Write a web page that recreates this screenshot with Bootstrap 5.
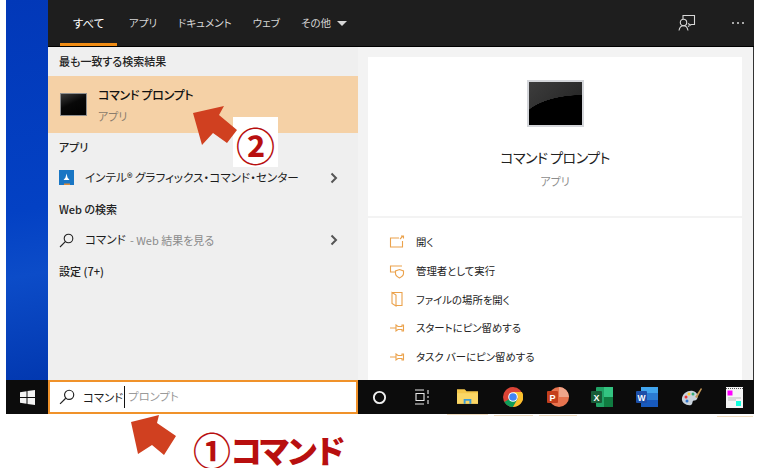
<!DOCTYPE html>
<html lang="ja">
<head>
  <meta charset="UTF-8">
  <meta name="viewport" content="width=device-width, initial-scale=1.0">
  <title>コマンド プロンプト</title>
  <link rel="stylesheet" href="https://cdn.jsdelivr.net/npm/bootstrap@5.3.0/dist/css/bootstrap.min.css">
  <style>
    body {
      margin: 0;
      background: #fff;
      font-family: "Noto Sans CJK JP", "Liberation Sans", sans-serif;
      font-size: 11px;
      font-feature-settings: "palt";
      color: #1c1c1c;
    }
    .shot { position: relative; width: 760px; height: 468px; overflow: hidden; }
    .desktop { width: 748px; height: 414px; margin-left: 6px; }
    .wall { width: 42px; background: linear-gradient(170deg, #0238b8 0%, #0341c4 55%, #0c4cc8 72%, #0238b0 100%); }
    .main { width: 706px; }

    /* top tabs */
    .tabbar { height: 47px; background: #1e1e1e; color: #d6d6d6; border-bottom: 1px solid #000; padding-left: 12px; }
    .tabitem { height: 46px; font-size: 10.5px; line-height: 46px; margin-right: 21px; }
    .tabitem.on { color: #fff; border-bottom: 3px solid #f08c14; width: 57px; text-align: center; margin-right: 12px; font-size: 11.5px; }
    .caret-down { width: 0; height: 0; border-left: 5px solid transparent; border-right: 5px solid transparent; border-top: 5px solid #d6d6d6; margin-left: 6px; margin-top: 1px; }
    .tab-tools { height: 45px; gap: 35px; padding-right: 9px; }

    /* left results */
    .results { width: 310px; height: 333px; background: #efefef; }
    .head-row { font-size: 11px; font-weight: 500; padding-left: 11px; color: #222; }
    .best { height: 57px; background: #f5d1a6; padding-left: 12px; gap: 11px; }
    .cmd-mini { width: 27px; height: 23px; flex: none; background: linear-gradient(155deg, #3a3a3a 0%, #080808 45%, #000 100%); border: 1px solid #8d8d8d; }
    .best-name { font-size: 12px; font-weight: 500; color: #111; line-height: 18px; letter-spacing: -0.3px; }
    .best-sub { font-size: 11px; color: #8a7c6c; line-height: 16px; margin-top: 4px; }
    .res-line { padding: 0 20px 0 11px; font-size: 11.6px; gap: 11px; }
    .grey-note { color: #8b8b8b; font-size: 11px; margin-left: -7px; }

    /* right detail */
    .detail { width: 396px; height: 333px; background: #f3f3f3; padding: 10px 11px 0 10px; border-right: 1px solid #333; }
    .info-box { height: 159px; background: #fff; margin-bottom: 2px; }
    .big-cmd { width: 57px; height: 47px; margin-top: 23px; border: 2px solid #d4d6da; background: radial-gradient(ellipse 62px 30px at 100% 100%, #000 99%, transparent 100%), linear-gradient(135deg, #3d3d3d, #1e1e1e); }
    .big-name { font-size: 14px; color: #222; margin-top: 20px; line-height: 20px; letter-spacing: -0.5px; }
    .big-sub { font-size: 11px; color: #8d8d8d; margin-top: 6px; line-height: 16px; }
    .action-box { height: 162px; background: #fff; padding: 10px 0 0 21px; }
    .action-row { height: 28.6px; gap: 11px; font-size: 10.4px; color: #222; }
    .action-ico { width: 16px; height: 16px; flex: none; }

    /* taskbar */
    .taskbar { height: 34px; background: #0c0c0c; }
    .startbtn { width: 42px; flex: none; }
    .searchbox { width: 310px; height: 34px; flex: none; background: #fff; border: 2px solid #f0922a; padding-left: 9px; font-size: 11.4px; }
    .ghost-text { color: #9a9a9a; }
    .typed { border-right: 1px solid #111; padding-right: 1px; margin-right: 3px; line-height: 22px; }
    .tray-slot { width: 44.6px; flex: none; position: relative; }
    .running::after { content: ""; position: absolute; left: 3px; right: 3px; bottom: -9px; height: 1px; background: #f0dcc0; }

    /* red annotations */
    .note-red { color: #b80f0f; font-weight: 700; font-feature-settings: normal; }
    .note-one { position: absolute; left: 193px; top: 431px; height: 36px; line-height: 36px; white-space: nowrap; }
    .note-one span { display: inline-block; }
    .note-one .circled { font-size: 38px; }
    .note-one .word { font-size: 32px; letter-spacing: -4px; font-weight: 900; margin-left: -1px; vertical-align: 2px; }
    .note-two { position: absolute; left: 233px; top: 117px; width: 45px; height: 50px; background: #fff; font-size: 39px; line-height: 54px; text-align: center; }
    .arrow { position: absolute; }
  </style>
</head>
<body>
  <div class="shot">
    <div class="desktop d-flex flex-column">
      <div class="d-flex flex-grow-1">
        <div class="wall"></div>
        <div class="main d-flex flex-column">
          <div class="tabbar d-flex align-items-start">
            <div class="tabitem on">すべて</div>
            <div class="tabitem">アプリ</div>
            <div class="tabitem">ドキュメント</div>
            <div class="tabitem">ウェブ</div>
            <div class="tabitem d-flex align-items-center">その他<span class="caret-down"></span></div>
            <div class="tab-tools ms-auto d-flex align-items-center">
              <svg width="18" height="18" viewBox="0 0 18 18" fill="none" stroke="#d8d8d8" stroke-width="1.1"><path d="M5 5V1.5h11.5v9H12.5"/><path d="M10 9.5l2.500 1.500-2.500 1.500"/><circle cx="5.500" cy="8.500" r="3.200"/><path d="M1 16.500c.5-3 2.200-4.800 4.500-4.800s4 1.800 4.500 4.800"/></svg>
              <svg width="14" height="4" viewBox="0 0 14 4" fill="#d8d8d8"><circle cx="2" cy="2" r="1"/><circle cx="7" cy="2" r="1"/><circle cx="12" cy="2" r="1"/></svg>
            </div>
          </div>
          <div class="d-flex flex-grow-1">
            <div class="results">
              <div class="head-row d-flex align-items-center" style="height:29px">最も一致する検索結果</div>
              <div class="best d-flex align-items-center">
                <div class="cmd-mini"></div>
                <div>
                  <div class="best-name">コマンド プロンプト</div>
                  <div class="best-sub">アプリ</div>
                </div>
              </div>
              <div class="head-row d-flex align-items-center" style="height:28px">アプリ</div>
              <div class="res-line d-flex align-items-center" style="height:33px">
                <svg width="15" height="15" viewBox="0 0 15 15" class="flex-shrink-0"><rect width="15" height="15" fill="#1976c4"/><rect y="13.500" x="5" width="6" height="1.500" fill="#d98a3a"/><path d="M7.500 3.500l1 4 2 2.500h-6l2-2.500z" fill="#fff"/></svg>
                <span class="text-nowrap">インテル® グラフィックス・コマンド・センター</span>
                <svg class="ms-auto flex-shrink-0" width="8" height="12" viewBox="0 0 8 12" fill="none" stroke="#555" stroke-width="2"><path d="M1.500 1.500L6 6l-4.500 4.500"/></svg>
              </div>
              <div class="head-row d-flex align-items-center" style="height:30px">Web の検索</div>
              <div class="res-line d-flex align-items-center" style="height:32px">
                <svg width="15" height="15" viewBox="0 0 15 15" fill="none" stroke="#222" stroke-width="1.100" class="flex-shrink-0"><circle cx="9.500" cy="5.500" r="4.300"/><path d="M6.300 8.700L1 14"/></svg>
                <span>コマンド</span><span class="grey-note">- Web 結果を見る</span>
                <svg class="ms-auto flex-shrink-0" width="8" height="12" viewBox="0 0 8 12" fill="none" stroke="#555" stroke-width="2"><path d="M1.500 1.500L6 6l-4.500 4.500"/></svg>
              </div>
              <div class="head-row d-flex align-items-center" style="height:31px">設定 (7+)</div>
            </div>
            <div class="detail">
              <div class="info-box d-flex flex-column align-items-center">
                <div class="big-cmd"></div>
                <div class="big-name">コマンド プロンプト</div>
                <div class="big-sub">アプリ</div>
              </div>
              <div class="action-box">
                <div class="action-row d-flex align-items-center">
                  <svg class="action-ico" viewBox="0 0 16 16" fill="none" stroke="#eba24c" stroke-width="1.100"><path d="M10 4H1.500v9h12V7"/><path d="M11 5l3-3M12 2h2.500v2.500"/></svg>
                  <span>開く</span>
                </div>
                <div class="action-row d-flex align-items-center">
                  <svg class="action-ico" viewBox="0 0 16 16" fill="none" stroke="#eba24c" stroke-width="1.100"><path d="M13 3H1.500v6H6"/><path d="M10.500 6.500l4 1.500v2.500c0 2-2 3.500-4 4.500-2-1-4-2.500-4-4.500V8z"/></svg>
                  <span>管理者として実行</span>
                </div>
                <div class="action-row d-flex align-items-center">
                  <svg class="action-ico" viewBox="0 0 16 16" fill="none" stroke="#eba24c" stroke-width="1.100"><path d="M3 1.500h10v13H7"/><path d="M3 1.500l4 2.500v11l-4-2.500z"/></svg>
                  <span>ファイルの場所を開く</span>
                </div>
                <div class="action-row d-flex align-items-center">
                  <svg class="action-ico" viewBox="0 0 16 16" fill="none" stroke="#eba24c" stroke-width="1.100"><path d="M1 8h6M7 5l2 1.500h4V5h1.500v6H13V9.500H9L7 11z"/></svg>
                  <span>スタートにピン留めする</span>
                </div>
                <div class="action-row d-flex align-items-center">
                  <svg class="action-ico" viewBox="0 0 16 16" fill="none" stroke="#eba24c" stroke-width="1.100"><path d="M1 8h6M7 5l2 1.500h4V5h1.500v6H13V9.500H9L7 11z"/></svg>
                  <span>タスク バーにピン留めする</span>
                </div>
              </div>
            </div>
          </div>
        </div>
      </div>
      <div class="taskbar d-flex align-items-center">
        <div class="startbtn d-flex justify-content-center">
          <svg width="15" height="15" viewBox="0 0 15 15" fill="#f2f2f2"><path d="M0 2.200l6.500-1V7H0zM7.500 1l7.500-1v7H7.500zM0 8h6.500v5.800l-6.500-1zM7.500 8H15v7l-7.500-1z"/></svg>
        </div>
        <div class="searchbox d-flex align-items-center">
          <svg width="16" height="16" viewBox="0 0 15 15" fill="none" stroke="#222" stroke-width="1.100"><circle cx="9.500" cy="5.500" r="4.300"/><path d="M6.300 8.700L1 14"/></svg>
          <span class="typed ms-2">コマンド</span><span class="ghost-text">プロンプト</span>
        </div>
        <div class="d-flex flex-shrink-0 align-items-center">
          <div class="tray-slot d-flex justify-content-center" style="width:42px">
            <svg width="15" height="15" viewBox="0 0 16 16" fill="none" stroke="#f0f0f0" stroke-width="2"><circle cx="8" cy="8" r="6"/></svg>
          </div>
          <div class="tray-slot d-flex justify-content-center" style="width:44px">
            <svg width="17" height="16" viewBox="0 0 17 16" fill="none" stroke="#e8e8e8" stroke-width="1.100"><path d="M1 1h9M1 15h9M2 4.500h8v7H2z"/><path d="M14 1v4M14 7v2M14 11v4"/></svg>
          </div>
          <div class="tray-slot running d-flex justify-content-center" style="width:47px">
            <svg width="21" height="18" viewBox="0 0 22 18"><path d="M0 1h8l2 2h12v13H0z" fill="#f5c84b"/><rect y="5" width="22" height="11" fill="#fbd766"/><path d="M7 16v-5h8v5h-2v-3H9v3z" fill="#3a9bd8"/></svg>
          </div>
          <div class="tray-slot running d-flex justify-content-center">
            <svg width="20" height="20" viewBox="0 0 20 20"><circle cx="10" cy="10" r="10" fill="#db4437"/><path d="M10 10L1.300 15A10 10 0 0 0 10 20l5-8z" fill="#0f9d58"/><path d="M10 5h8.900A10 10 0 0 1 10 20l5-8.700z" fill="#fbc02d"/><circle cx="10" cy="10" r="4.800" fill="#fff"/><circle cx="10" cy="10" r="3.800" fill="#4285f4"/></svg>
          </div>
          <div class="tray-slot running d-flex justify-content-center">
            <svg width="22" height="20" viewBox="0 0 22 20"><circle cx="12" cy="10" r="10" fill="#e8744f"/><path d="M12 0a10 10 0 0 1 10 10H12z" fill="#f0a58a"/><rect y="4" width="11" height="12" rx="1" fill="#c43e1c"/><text x="5.500" y="13.500" font-size="9" font-weight="700" font-family="Liberation Sans" fill="#fff" text-anchor="middle">P</text></svg>
          </div>
          <div class="tray-slot d-flex justify-content-center">
            <svg width="22" height="20" viewBox="0 0 22 20"><rect x="5" width="17" height="20" rx="1" fill="#21a366"/><rect x="13" width="9" height="10" fill="#33c481"/><rect x="13" y="10" width="9" height="10" fill="#107c41"/><rect y="4" width="11" height="12" rx="1" fill="#185c37"/><text x="5.500" y="13.500" font-size="9" font-weight="700" font-family="Liberation Sans" fill="#fff" text-anchor="middle">X</text></svg>
          </div>
          <div class="tray-slot d-flex justify-content-center">
            <svg width="22" height="20" viewBox="0 0 22 20"><rect x="5" width="17" height="20" rx="1" fill="#2b7cd3"/><rect x="5" width="17" height="6" fill="#41a5ee"/><rect x="5" y="13" width="17" height="7" fill="#185abd"/><rect y="4" width="11" height="12" rx="1" fill="#1d4fa8"/><text x="5.500" y="13.500" font-size="8.500" font-weight="700" font-family="Liberation Sans" fill="#fff" text-anchor="middle">W</text></svg>
          </div>
          <div class="tray-slot d-flex justify-content-center">
            <svg width="22" height="20" viewBox="0 0 22 20"><path d="M1 11c1-5 6-8 11-7 4 1 6 5 4 8-1 2-3 1-4 2s0 3-2 4c-4 1-10-2-9-7z" fill="#c9d2dc"/><circle cx="5" cy="10" r="1.500" fill="#e33"/><circle cx="8" cy="7" r="1.500" fill="#fc3"/><circle cx="12" cy="7" r="1.500" fill="#3a7"/><circle cx="6" cy="14" r="1.500" fill="#37c"/><path d="M14 10l6-9 1 1-5 9z" fill="#c79a5a"/></svg>
          </div>
          <div class="tray-slot running d-flex justify-content-center" style="width:42px">
            <svg width="17" height="21" viewBox="0 0 17 21"><rect width="17" height="21" fill="#f4f4f4"/><path d="M0 1.500h17" stroke="#555" stroke-dasharray="1 1"/><rect x="1.500" y="3.500" width="5" height="5" fill="#f0f"/><rect x="10" y="14" width="5" height="5" fill="#1fd"/><path d="M2 11h13M2 13h8" stroke="#bbb"/></svg>
          </div>
        </div>
      </div>
    </div>

    <div class="note-red note-two">②</div>
    <div class="note-red note-one"><span class="circled">①</span><span class="word">コマンド</span></div>
    <svg class="arrow" style="left:192px;top:105px" width="48" height="42" viewBox="0 0 48 42"><path d="M1 8L32 1 27 10 45 25 35 38 21 28 10 40z" fill="#d04020"/></svg>
    <svg class="arrow" style="left:130px;top:414px" width="48" height="44" viewBox="0 0 48 44"><path d="M1 8L29 1 27 9 46 22 34 41 22 31 8 40z" fill="#d04020"/></svg>
  </div>
  <script src="https://cdn.jsdelivr.net/npm/bootstrap@5.3.0/dist/js/bootstrap.bundle.min.js"></script>
</body>
</html>
